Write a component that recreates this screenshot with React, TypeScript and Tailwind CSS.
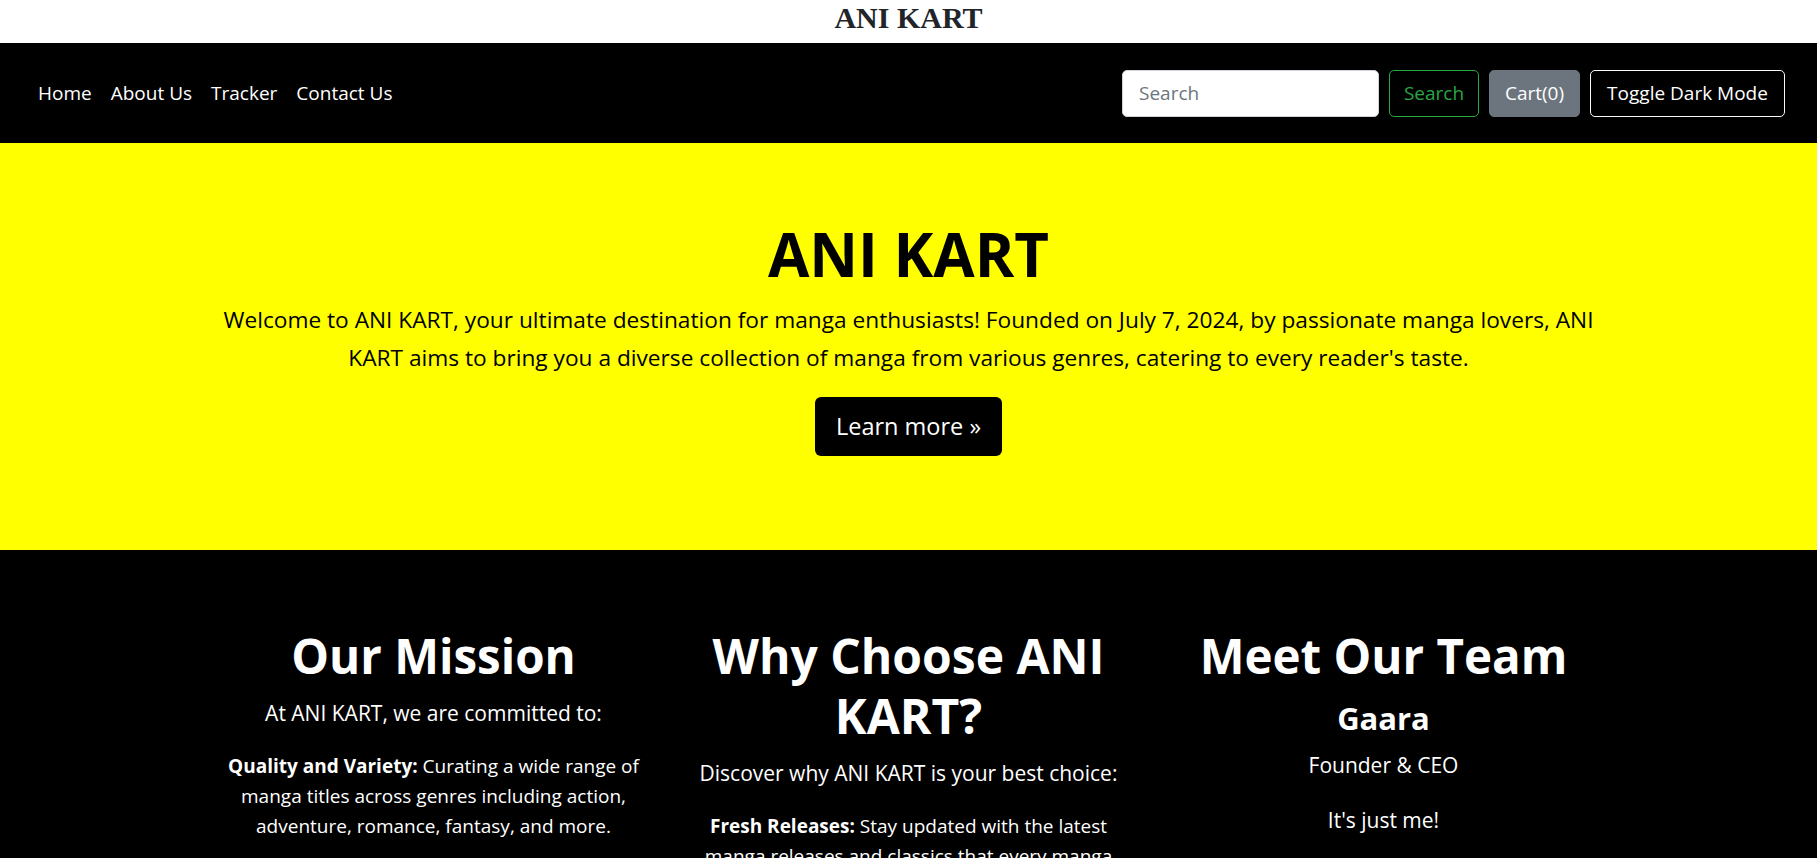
import React from "react";

const navLinks = ["Home", "About Us", "Tracker", "Contact Us"];

const App = () => (
  <div className="min-h-screen bg-black font-['Open_Sans',sans-serif] text-white">
    {/* Top title */}
    <header className="h-[43px] bg-white text-center">
      <h1 className="font-['Liberation_Serif',serif] text-[30px] leading-[36px] font-bold text-[#212529]">ANI KART</h1>
    </header>

    {/* Navbar */}
    <nav className="h-[100px] bg-black flex items-center justify-between pl-[38px] pr-[32px]">
      <div className="flex items-center gap-[19px] text-[19px] leading-[30px] text-white">
        {navLinks.map((l) => (
          <a key={l} href="#" className="hover:text-gray-300">{l}</a>
        ))}
      </div>
      <div className="flex items-center gap-[10px] text-[19px]">
        <input
          type="text"
          placeholder="Search"
          className="w-[257px] h-[47px] rounded-[5px] border border-[#ced4da] bg-white px-[16px] text-[#495057] placeholder:text-[#6c757d] focus:outline-none"
        />
        <button className="w-[90px] h-[47px] rounded-[5px] border border-[#28a745] text-[#28a745]">Search</button>
        <button className="w-[91px] h-[47px] rounded-[5px] border border-[#6c757d] bg-[#6c757d] text-white">Cart(0)</button>
        <button className="w-[195px] h-[47px] rounded-[5px] border border-[#f8f9fa] text-white">Toggle Dark Mode</button>
      </div>
    </nav>

    {/* Hero */}
    <section className="bg-[#ffff00] text-black pt-[75px] pb-[94px]">
      <div className="mx-auto w-[1425px] px-[15px] text-center">
        <h2 className="text-[60px] leading-[72px] font-bold mb-[11px]">ANI KART</h2>
        <p className="text-[22.7px] leading-[37.5px] mb-[21px]">
          Welcome to ANI KART, your ultimate destination for manga enthusiasts! Founded on July 7, 2024, by passionate manga lovers, ANI KART aims to bring you a diverse collection of manga from various genres, catering to every reader's taste.
        </p>
        <button className="h-[59px] w-[187px] rounded-[6px] bg-black text-white text-[23.5px]">Learn more »</button>
      </div>
    </section>

    {/* About columns */}
    <section className="bg-black pt-[76px] pb-16">
      <div className="mx-auto w-[1425px] grid grid-cols-3 text-center">
        <div className="px-[19px]">
          <h2 className="text-[47.5px] leading-[60px] font-bold mb-[12px]">Our Mission</h2>
          <p className="text-[21px] leading-[30px] mb-[23px]">At ANI KART, we are committed to:</p>
          <p className="text-[19px] leading-[30px] mb-[20px]">
            <strong>Quality and Variety:</strong> Curating a wide range of manga titles across genres including action, adventure, romance, fantasy, and more.
          </p>
          <p className="text-[19px] leading-[30px] mb-[20px]">
            <strong>Customer Satisfaction:</strong> Providing exceptional customer service and a seamless shopping experience.
          </p>
        </div>
        <div className="px-[19px]">
          <h2 className="text-[48px] leading-[60px] font-bold mb-[12px]">Why Choose ANI KART?</h2>
          <p className="text-[21px] leading-[30px] mb-[23px]">Discover why ANI KART is your best choice:</p>
          <p className="text-[19px] leading-[30px] mb-[20px]">
            <strong>Fresh Releases:</strong> Stay updated with the latest manga releases and classics that every manga enthusiast should read.
          </p>
          <p className="text-[19px] leading-[30px] mb-[20px]">
            <strong>Community:</strong> Join a community of manga lovers and share your favourite reads.
          </p>
        </div>
        <div className="px-[19px]">
          <h2 className="text-[47.5px] leading-[60px] font-bold mb-[11px]">Meet Our Team</h2>
          <h3 className="text-[31px] leading-[42px] font-bold mb-[11px]">Gaara</h3>
          <p className="text-[21px] leading-[30px] mb-[25px]">Founder &amp; CEO</p>
          <p className="text-[21px] leading-[30px] mb-[20px]">It's just me!</p>
        </div>
      </div>
    </section>
  </div>
);

export default App;
